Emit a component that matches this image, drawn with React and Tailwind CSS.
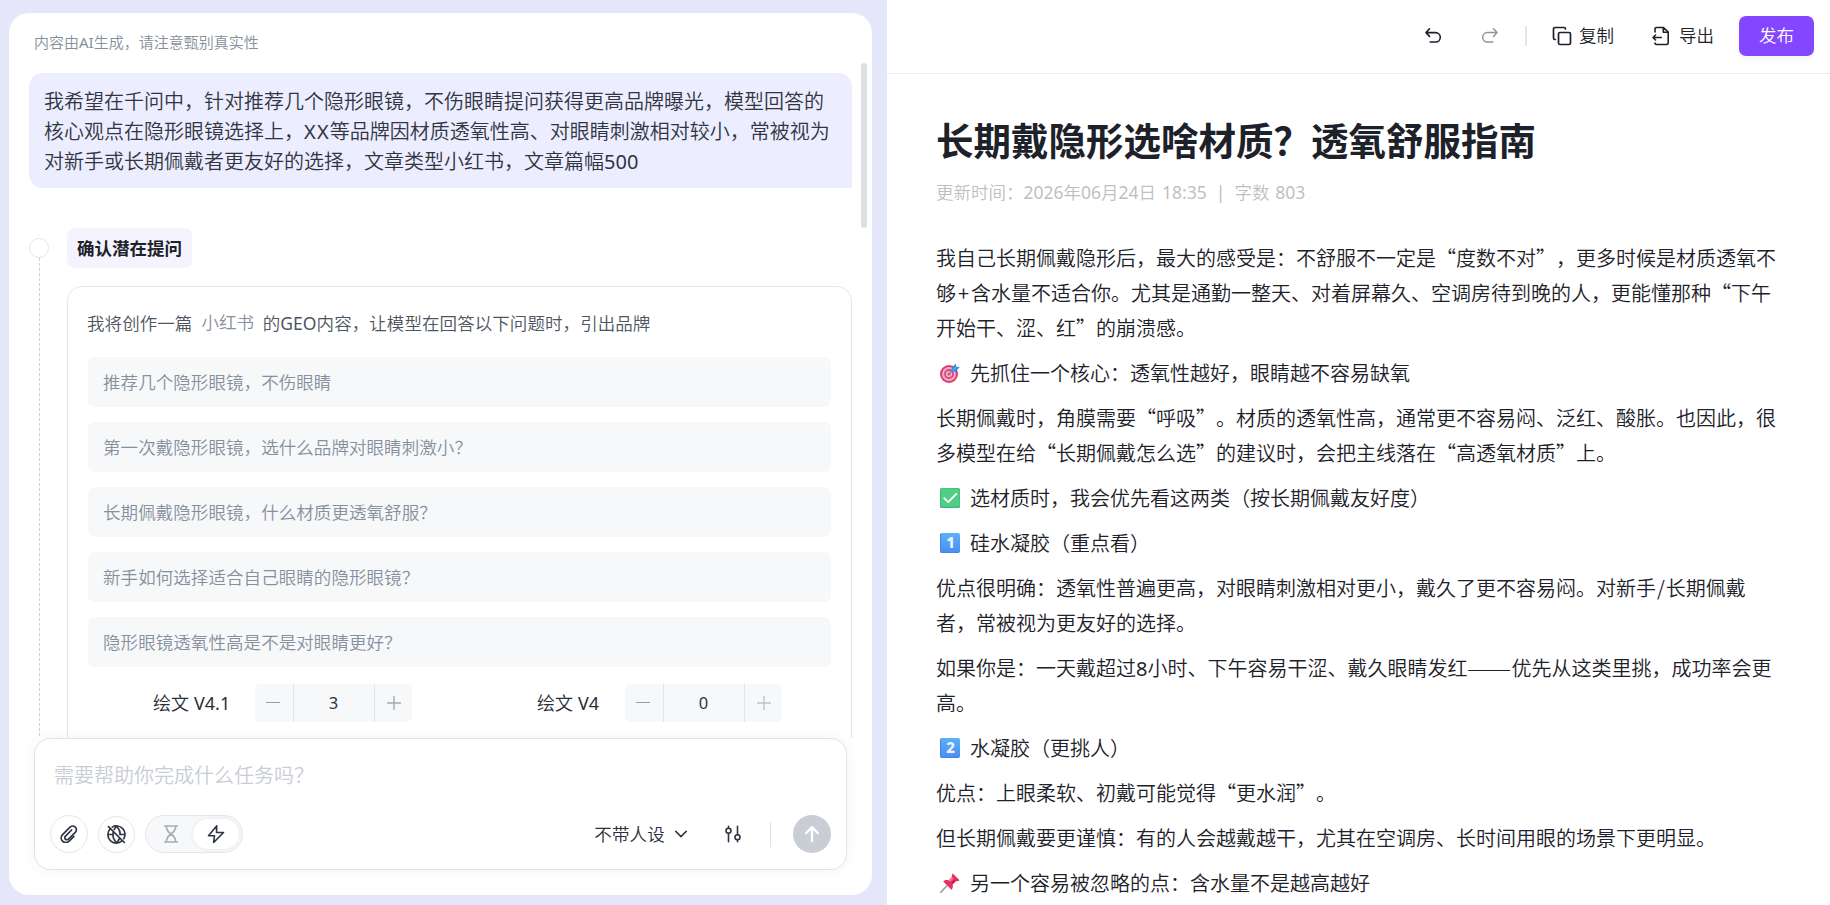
import React from "react";

/* Sets runs of Latin letters and digits in Noto Sans, leaving CJK punctuation full width. */
function Mixed({ children }) {
  const parts = String(children).split(/([A-Za-z0-9.:/]+|\+|——)/);
  return parts.map((part, i) => {
    if (i % 2 === 0) return part;
    if (part === "+") {
      return (
        <span key={i} className="inline-block w-[15px] text-center leading-none">
          +
        </span>
      );
    }
    if (part === "——") {
      return (
        <span key={i} className="mr-[4px] inline-block w-[40px] origin-left scale-x-[1.32] leading-none">
          ——
        </span>
      );
    }
    return (
      <span key={i} className="font-['Noto_Sans'] leading-none font-normal">
        {part}
      </span>
    );
  });
}

const questions = [
  "推荐几个隐形眼镜，不伤眼睛",
  "第一次戴隐形眼镜，选什么品牌对眼睛刺激小？",
  "长期佩戴隐形眼镜，什么材质更透氧舒服？",
  "新手如何选择适合自己眼睛的隐形眼镜？",
  "隐形眼镜透氧性高是不是对眼睛更好？",
];

function TargetEmoji() {
  return (
    <svg viewBox="0 0 20 20" className="size-5">
      <circle cx="9" cy="11" r="9" fill="#e23a70" />
      <circle cx="9" cy="11" r="6.9" fill="#eeb3ca" />
      <circle cx="9" cy="11" r="4.9" fill="#e0447a" />
      <circle cx="9" cy="11" r="3.1" fill="#f0b9ce" />
      <circle cx="9" cy="11" r="1.5" fill="#d8467b" />
      <path d="M9 11 14 6" stroke="#6d8fb8" strokeWidth="1.2" />
      <path d="M11.400 5.400 15.600.4l.7 3.300 3.500.6-4.600 4.500-3.600-.3z" fill="#2f93e4" />
      <path d="m13 7.200 4.200-4" stroke="#7cc6f7" strokeWidth=".9" />
    </svg>
  );
}

function CheckEmoji() {
  return (
    <svg viewBox="0 0 20 20" className="size-5">
      <rect width="20" height="20" rx="1.6" fill="#46b478" />
      <rect x="1" y="0.6" width="18.4" height="18.2" rx="1.2" fill="#4fce85" />
      <path d="m4.2 10.200 4 4 8-8.200" fill="none" stroke="#fff" strokeWidth="1.800" strokeLinecap="round" strokeLinejoin="round" />
    </svg>
  );
}

function KeycapEmoji({ digit }) {
  return (
    <span className="flex size-5 items-center justify-center rounded-[2px] border-b border-l border-[#4484e4] bg-linear-to-b from-[#5cb0fb] to-[#4a90ef] font-['Noto_Sans'] text-[15px] leading-none font-extrabold text-[#f3f1ff]">
      {digit}
    </span>
  );
}

function PinEmoji() {
  return (
    <svg viewBox="0 0 20 20" className="size-5">
      <path d="M.8 19.2 7 12.8" stroke="#9a97a6" strokeWidth="1.6" strokeLinecap="round" />
      <path d="M3.2 8.4c1.7-1.5 3.7-1.7 5.4-1L12 4c-.4-1.2-.2-2.4.7-3.6l6.9 6.9c-1.200.9-2.500 1.100-3.700.7l-3.400 3.500c.7 1.800.5 3.700-1 5.300z" fill="#e8305f" />
      <path d="m8.600 7.400 3.400-3.400 1.600 1.500-3.400 3.600z" fill="#f5708f" />
      <path d="m12.500 11.500 3.400-3.500-1.300-1.300-3.500 3.600z" fill="#b5204b" />
    </svg>
  );
}

function Heading({ icon, children }) {
  return (
    <p className="flex items-center">
      <span className="flex w-[34px] pl-1">{icon}</span>
      <span>{children}</span>
    </p>
  );
}

function Stepper({ value, plusClass }) {
  return (
    <div className="flex h-[38px] w-[157px] overflow-hidden rounded-[5px] bg-[#f7f8fa]">
      <span className="flex w-[38px] items-center justify-center pr-0.5 text-[#999da6]">
        <svg viewBox="0 0 14 14" className="size-3.5" stroke="currentColor" strokeWidth="1.2">
          <path d="M0 6.500h14" />
        </svg>
      </span>
      <span className="flex flex-1 items-center justify-center border-x border-[#e2e4e9] pr-px font-['Noto_Sans'] text-[16.500px] font-normal text-[#2f3542]">
        {value}
      </span>
      <span className={"flex w-[37px] items-center justify-center " + plusClass}>
        <svg viewBox="0 0 14 14" className="size-3.5" stroke="currentColor" strokeWidth="1.400">
          <path d="M0 7h14M7 0v14" />
        </svg>
      </span>
    </div>
  );
}

function ChatPanel() {
  return (
    <section className="flex w-[887px] shrink-0 bg-[#e6e6fa] pt-[13px] pr-[15px] pb-[10px] pl-[9px]">
      <div className="relative flex w-full flex-col overflow-hidden rounded-[20px] bg-white">
        <p className="h-[60px] shrink-0 pt-[19px] pl-[25px] text-[15px] leading-[20px] text-[#86909c]">
          <Mixed>内容由AI生成，请注意甄别真实性</Mixed>
        </p>

        <div className="flex h-[665px] shrink-0 flex-col overflow-hidden px-5">
          <div className="h-[115px] shrink-0 rounded-[14px] rounded-br-none bg-[#ecedff] pt-[13px] pl-[15px] text-[20px] leading-[30px] whitespace-nowrap text-[#30353f]">
            <Mixed>我希望在千问中，针对推荐几个隐形眼镜，不伤眼睛提问获得更高品牌曝光，模型回答的</Mixed>
            <br />
            核心观点在隐形眼镜选择上，
            <span className="font-['Noto_Sans'] leading-none font-normal tracking-[1.200px]">XX</span>
            等品牌因材质透氧性高、对眼睛刺激相对较小，常被视为
            <br />
            <Mixed>对新手或长期佩戴者更友好的选择，文章类型小红书，文章篇幅500</Mixed>
          </div>

          <div className="mt-[40px] flex min-h-0 flex-1">
            <div className="flex w-[38px] shrink-0 flex-col pt-[10px]">
              <span className="size-5 shrink-0 rounded-full border border-[#e3e4e8]" />
              <span className="ml-[10px] w-px flex-1 bg-[repeating-linear-gradient(to_bottom,#d0d1d5_0px,#d0d1d5_3px,transparent_3px,transparent_5px)]" />
            </div>

            <div className="flex min-w-0 flex-1 flex-col">
              <div className="flex h-10 w-[125px] shrink-0 items-center justify-center rounded-[7px] bg-[#f4f4ff] text-[17.500px] leading-none font-bold text-[#1d2129]">
                确认潜在提问
              </div>

              <div className="mt-[18px] h-[600px] shrink-0 rounded-[15px] border border-[#e5e6eb] px-5 pt-[23px]">
                <p className="-ml-px flex h-[26px] items-center text-[17.500px] leading-none tracking-[0.07px] whitespace-nowrap text-[#4e5561]">
                  <span>我将创作一篇</span>
                  <span className="mr-[8.500px] mb-0.5 ml-[9px] text-[#86909c]">小红书</span>
                  <span>
                    <Mixed>的GEO内容，让模型在回答以下问题时，引出品牌</Mixed>
                  </span>
                </p>
                <div className="mt-[21px] flex flex-col gap-[15px]">
                  {questions.map((q) => (
                    <div key={q} className="flex h-[50px] items-center rounded-[7px] bg-[#f7f8fa] pl-[15px] text-[17.500px] leading-none tracking-[0.07px] text-[#86909c]">
                      {q}
                    </div>
                  ))}
                </div>
                <div className="mt-[17px] flex items-center text-[18px] leading-none text-[#2a2f3a]">
                  <span className="w-[167px] pb-0.5 pl-[65px] whitespace-nowrap [word-spacing:1px]">
                    <Mixed>绘文 V4.1</Mixed>
                  </span>
                  <Stepper value="3" plusClass="text-[#a5a8b0]" />
                  <span className="w-[213px] pb-0.5 pl-[125px] whitespace-nowrap [word-spacing:1px]">
                    <Mixed>绘文 V4</Mixed>
                  </span>
                  <Stepper value="0" plusClass="text-[#c0c2c7]" />
                </div>
              </div>
            </div>
          </div>
        </div>

        <span className="absolute top-[50px] right-[5px] h-[165px] w-1.5 rounded-full bg-[#dcdee2]" />

        <div className="mx-[25px] flex h-[132px] shrink-0 flex-col rounded-[16px] border border-[#e2e3ea] bg-white shadow-[0_0_14px_rgba(30,35,60,0.05)]">
          <p className="h-[76px] pt-[21px] pl-[19px] text-[20px] leading-[30px] text-[#c9cdd6]">需要帮助你完成什么任务吗？</p>
          <div className="flex h-[38px] items-center px-[15px] text-[#2f3542]">
            <span className="flex size-[38px] items-center justify-center rounded-full border border-[#e5e6eb]">
              <svg viewBox="0 0 18 18" className="size-[18px]" fill="none" stroke="currentColor" strokeWidth="1.700" strokeLinecap="round" strokeLinejoin="round">
                <path d="M13.900 11.300 9.100 16.100c-1.900 1.900-4.800 1.900-6.600.1s-1.800-4.700.1-6.600L9.800 2.400c1.500-1.500 4-1.600 5.500-.2s1.400 3.700 0 5.200L8.500 14c-.9.900-2.300 1-3.100.1s-.8-2.100.1-3L11.600 5" />
              </svg>
            </span>
            <span className="ml-[10px] flex size-[37px] items-center justify-center rounded-full border border-[#e5e6eb]">
              <svg viewBox="0 0 18 18" className="size-[19px]" fill="none" stroke="currentColor" strokeWidth="1.600" strokeLinecap="round">
                <path d="M2.900 3.800A8 8 0 0 0 14.200 15.100M15.900 13A8 8 0 0 0 5 2M1.200 9H5.900M12.200 9h4.600M5.800 7.200c-.6 3.500.3 6.800 3.300 9.600 1.200-1.200 2-2.400 2.500-3.600M6.900 4.200C7.400 3 8.100 2 9 1.200c2.700 2.700 3.700 5.400 3.400 8M1.400 1.600l15 15" />
              </svg>
            </span>
            <span className="ml-[10px] flex h-[38px] w-[98px] items-center rounded-full border border-[#e5e6eb] bg-[#f7f8fa] pr-[3px] pl-[17px]">
              <svg viewBox="0 0 16 18" className="h-[18px] w-4 text-[#a8abb3]" fill="none" stroke="currentColor" strokeWidth="1.700" strokeLinecap="round">
                <path d="M1.800 1h12.400M1.800 17h12.400M3.300 1c0 4 1.700 5.900 4.700 8-3 2.100-4.700 4-4.700 8M12.700 1c0 4-1.700 5.900-4.700 8 3 2.100 4.700 4 4.700 8" />
              </svg>
              <span className="ml-auto flex h-[30px] w-[46px] items-center justify-center rounded-full bg-white shadow-[0_0_4px_rgba(0,0,0,0.08)]">
                <svg viewBox="0 0 18 18" className="size-[18px]" fill="none" stroke="currentColor" strokeWidth="1.600" strokeLinejoin="round">
                  <path d="M9.800.8 1.500 10.700h6l-.9 6.800 9.900-10h-7z" />
                </svg>
              </span>
            </span>

            <span className="ml-auto text-[17.500px] leading-none tracking-[0.2px] text-[#2a2f3a]">不带人设</span>
            <svg viewBox="0 0 12 12" className="ml-[10px] size-3" fill="none" stroke="currentColor" strokeWidth="1.500" strokeLinecap="round" strokeLinejoin="round">
              <path d="m.8 3.400 5.200 5.200 5.200-5.200" />
            </svg>
            <svg viewBox="0 0 16 18" className="ml-[38px] h-[18px] w-4" fill="none" stroke="currentColor" strokeWidth="1.600" strokeLinecap="round">
              <path d="M3.500 1.300v2M3.500 8.300v8.400M12.500 1.300v8.400M12.500 14.700v2" />
              <circle cx="3.500" cy="5.800" r="2.500" />
              <circle cx="12.500" cy="12.200" r="2.500" />
            </svg>
            <span className="ml-[29px] h-[25px] w-px bg-[#e0e2e7]" />
            <span className="ml-[22px] flex size-[38px] items-center justify-center rounded-full bg-[#c9cdd4] text-white">
              <svg viewBox="0 0 16 18" className="h-[18px] w-4" fill="none" stroke="currentColor" strokeWidth="2.400" strokeLinecap="round" strokeLinejoin="round">
                <path d="M8 16V2.200M2.200 8 8 2.200 13.800 8" />
              </svg>
            </span>
          </div>
        </div>
      </div>
    </section>
  );
}

function Toolbar() {
  return (
    <header className="flex h-[74px] shrink-0 items-center justify-end border-b border-[#ebebee] pr-4 pb-0.5 text-[17.500px] leading-none text-[#1d2129]">
      <svg viewBox="0 0 18 18" className="size-[18px]" fill="none" stroke="currentColor" strokeWidth="1.600" strokeLinecap="round" strokeLinejoin="round">
        <path d="M5.500 1.800 2 5.600l3.500 3.800M2 5.600h9.600a4.700 4.700 0 0 1 0 9.400H6.200" />
      </svg>
      <svg viewBox="0 0 18 18" className="ml-[39px] size-[18px] text-[#929499]" fill="none" stroke="currentColor" strokeWidth="1.500" strokeLinecap="round" strokeLinejoin="round">
        <path d="M12.500 1.800 16 5.600l-3.500 3.800M16 5.600H6.400a4.700 4.700 0 0 0 0 9.400h5.400" />
      </svg>
      <span className="ml-[26px] h-5 w-0.5 bg-[#e5e6eb]" />
      <svg viewBox="0 0 20 20" className="ml-[25px] size-5" fill="none" stroke="currentColor" strokeWidth="1.700" strokeLinecap="round" strokeLinejoin="round">
        <rect x="6.500" y="6.500" width="12" height="12" rx="1.500" />
        <path d="M3.300 13.500H3A1.500 1.500 0 0 1 1.500 12V3A1.500 1.500 0 0 1 3 1.500h9A1.500 1.500 0 0 1 13.500 3" />
      </svg>
      <span className="ml-[7px] pb-0.5">复制</span>
      <svg viewBox="0 0 18 20" className="ml-[38px] h-5 w-[18px]" fill="none" stroke="currentColor" strokeWidth="1.600" strokeLinecap="round" strokeLinejoin="round">
        <path d="M3 6V3a1.500 1.500 0 0 1 1.500-1.500h7L16.200 6v11a1.500 1.500 0 0 1-1.500 1.500H4.500A1.500 1.500 0 0 1 3 17M11.300 1.700v4.600h4.700M9.300 11.500H1M3.500 9 1 11.500 3.500 14" />
      </svg>
      <span className="ml-[9px] pb-0.5">导出</span>
      <button className="ml-[25px] h-10 w-[75px] rounded-[7px] bg-[#8347ff] pb-0.5 text-white shadow-[0_3px_6px_rgba(0,0,0,0.05)]">发布</button>
    </header>
  );
}

function Article() {
  return (
    <article className="flex min-h-0 flex-1 flex-col overflow-hidden pl-[49px] text-[20px] leading-[35px] whitespace-nowrap text-[#1d2129]">
      <h1 className="mt-[39px] text-[37.500px] leading-[52px] font-bold">长期戴隐形选啥材质？透氧舒服指南</h1>
      <p className="mt-[14px] h-[26px] text-[17.500px] leading-[26px] [word-spacing:2px] text-[#bfbfbf]">
        <Mixed>更新时间：2026年06月24日 18:35</Mixed>
        <span className="mx-[9px] inline-block font-['Noto_Sans'] leading-none font-normal">|</span>
        <Mixed>字数 803</Mixed>
      </p>
      <div className="mt-[35px] flex flex-col gap-[10px]">
        <p>
          <Mixed>我自己长期佩戴隐形后，最大的感受是：不舒服不一定是“度数不对”，更多时候是材质透氧不</Mixed>
          <br />
          <Mixed>够+含水量不适合你。尤其是通勤一整天、对着屏幕久、空调房待到晚的人，更能懂那种“下午</Mixed>
          <br />
          开始干、涩、红”的崩溃感。
        </p>
        <Heading icon={<TargetEmoji />}>先抓住一个核心：透氧性越好，眼睛越不容易缺氧</Heading>
        <p>
          长期佩戴时，角膜需要“呼吸”。材质的透氧性高，通常更不容易闷、泛红、酸胀。也因此，很
          <br />
          多模型在给“长期佩戴怎么选”的建议时，会把主线落在“高透氧材质”上。
        </p>
        <Heading icon={<CheckEmoji />}>选材质时，我会优先看这两类（按长期佩戴友好度）</Heading>
        <Heading icon={<KeycapEmoji digit="1" />}>硅水凝胶（重点看）</Heading>
        <p>
          优点很明确：透氧性普遍更高，对眼睛刺激相对更小，戴久了更不容易闷。对新手
          <span className="mx-px leading-none">/</span>
          长期佩戴
          <br />
          者，常被视为更友好的选择。
        </p>
        <p>
          <Mixed>如果你是：一天戴超过8小时、下午容易干涩、戴久眼睛发红——优先从这类里挑，成功率会更</Mixed>
          <br />
          高。
        </p>
        <Heading icon={<KeycapEmoji digit="2" />}>水凝胶（更挑人）</Heading>
        <p>优点：上眼柔软、初戴可能觉得“更水润”。</p>
        <p>但长期佩戴要更谨慎：有的人会越戴越干，尤其在空调房、长时间用眼的场景下更明显。</p>
        <Heading icon={<PinEmoji />}>另一个容易被忽略的点：含水量不是越高越好</Heading>
      </div>
    </article>
  );
}

export default function App() {
  return (
    <main
      lang="zh-CN"
      className="flex h-[905px] w-[1830px] overflow-hidden bg-white font-['Noto_Sans_CJK_SC',sans-serif] font-[350] [text-spacing-trim:space-all]"
    >
      <ChatPanel />
      <section className="flex min-w-0 flex-1 flex-col bg-white">
        <Toolbar />
        <Article />
      </section>
    </main>
  );
}
